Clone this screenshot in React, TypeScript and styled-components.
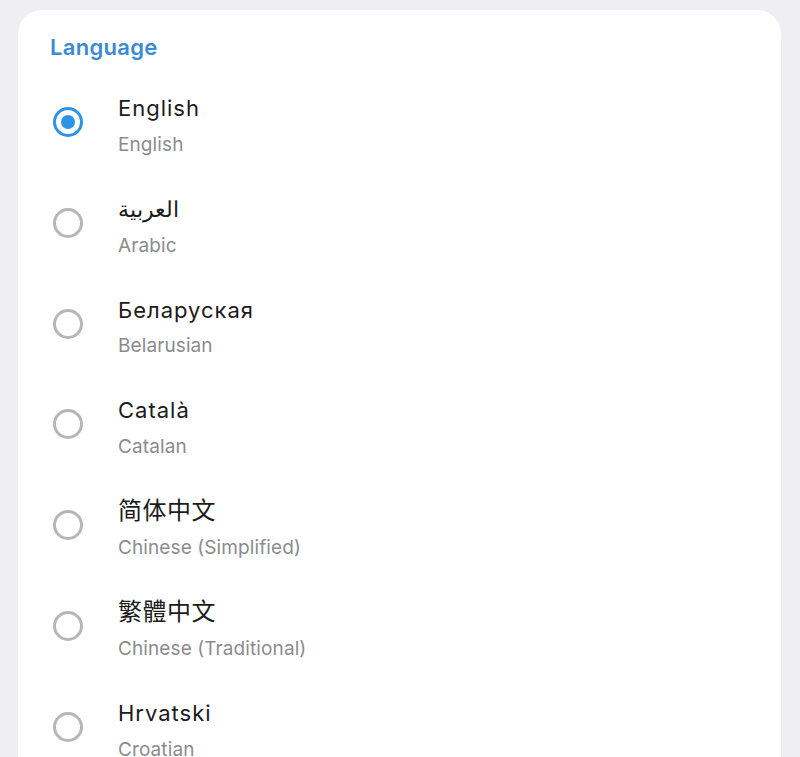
import React, { useState } from "react";
import styled, { createGlobalStyle } from "styled-components";

const colors = {
  page: "#efeff3",
  card: "#ffffff",
  accent: "#2f93e6",
  header: "#3a8bd3",
  title: "#1b1b1b",
  subtitle: "#8b8b8e",
  radioOff: "#b6b6b8",
};

const fontStack = `Inter, "Noto Sans", "Noto Sans CJK SC", sans-serif`;

interface ILanguage {
  code: string;
  name: string;
  english: string;
}

const languages: ILanguage[] = [
  { code: "en", name: "English", english: "English" },
  { code: "ar", name: "العربية", english: "Arabic" },
  { code: "be", name: "Беларуская", english: "Belarusian" },
  { code: "ca", name: "Català", english: "Catalan" },
  { code: "zh-hans", name: "简体中文", english: "Chinese (Simplified)" },
  { code: "zh-hant", name: "繁體中文", english: "Chinese (Traditional)" },
  { code: "hr", name: "Hrvatski", english: "Croatian" },
];

const GlobalStyle = createGlobalStyle`
  html, body {
    margin: 0;
    padding: 0;
    background: ${colors.page};
    font-family: ${fontStack};
    -webkit-font-smoothing: antialiased;
  }
`;

export default function App() {
  const [active, setActive] = useState("en");

  return (
    <>
      <GlobalStyle />
      <Page>
        <Card>
          <Header>Language</Header>
          <List>
            {languages.map(({ code, name, english }) => (
              <Row key={code} onClick={() => setActive(code)}>
                <Radio checked={active === code} />
                <Labels>
                  <Title cjk={code.startsWith("zh")}>{name}</Title>
                  <Subtitle>{english}</Subtitle>
                </Labels>
              </Row>
            ))}
          </List>
        </Card>
      </Page>
    </>
  );
}

const Page = styled.div`
  height: 757px;
  overflow: hidden;
  padding: 10px 19px 0 18px;
  box-sizing: border-box;
`;

const Card = styled.div`
  background: ${colors.card};
  border-radius: 24px 24px 0 0;
  padding: 23px 32px 0 35px;
  min-height: 800px;
`;

const Header = styled.h2`
  margin: 0 0 0 -3px;
  font-size: 22px;
  line-height: 28px;
  font-weight: 600;
  letter-spacing: 0.3px;
  color: ${colors.header};
`;

const List = styled.div`
  display: flex;
  flex-direction: column;
  margin-top: 10.6px;
`;

const Row = styled.div`
  display: flex;
  align-items: center;
  height: 100.8px;
  cursor: pointer;
`;

const Radio = styled.span<{ checked: boolean }>`
  flex: none;
  box-sizing: border-box;
  width: 30px;
  height: 30px;
  border-radius: 50%;
  border: 3px solid ${({ checked }) => (checked ? colors.accent : colors.radioOff)};
  display: flex;
  align-items: center;
  justify-content: center;
  &::after {
    content: "";
    width: 14px;
    height: 14px;
    border-radius: 50%;
    background: ${colors.accent};
    display: ${({ checked }) => (checked ? "block" : "none")};
  }
`;

const Labels = styled.div`
  display: flex;
  flex-direction: column;
  gap: 12.8px;
  margin-left: 35px;
  margin-top: 7px;
`;

const Title = styled.span<{ cjk?: boolean }>`
  font-size: ${({ cjk }) => (cjk ? "24px" : "22px")};
  line-height: 26px;
  letter-spacing: ${({ cjk }) => (cjk ? "0.5px" : "1px")};
  color: ${colors.title};
`;

const Subtitle = styled.span`
  font-size: 19px;
  line-height: 22px;
  letter-spacing: 0.1px;
  color: ${colors.subtitle};
`;
